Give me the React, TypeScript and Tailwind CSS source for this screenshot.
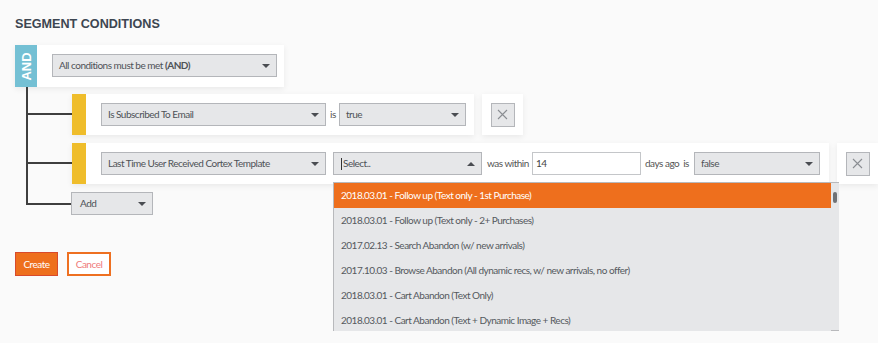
import React from "react";

const Arrow = ({ up = false }: { up?: boolean }) => (
  <svg width="8" height="4" viewBox="0 0 8 4" className="shrink-0">
    {up ? <path d="M0 4 L4 0 L8 4 Z" fill="#4a4d52" /> : <path d="M0 0 L8 0 L4 4 Z" fill="#4a4d52" />}
  </svg>
);

const Select = ({ w, children, up = false }: { w: string; children: React.ReactNode; up?: boolean }) => (
  <div className={`${w} h-[23px] shrink-0 flex items-center justify-between border border-[#b4b6ba] bg-[#e6e7e9] pl-[6px] pr-[6px] text-[10px] text-[#4e5257]`}>
    <span className="whitespace-nowrap">{children}</span>
    <Arrow up={up} />
  </div>
);

const XBox = () => (
  <div className="h-[41px] w-[41px] bg-white shadow-[0_2px_6px_rgba(0,0,0,0.07)] flex items-center justify-center shrink-0">
    <div className="w-[24px] h-[24px] border border-[#b4b6ba] bg-[#e6e7e9] flex items-center justify-center">
      <svg width="11" height="11" viewBox="0 0 11 11">
        <path d="M1 1 L10 10 M10 1 L1 10" stroke="#8a8d92" strokeWidth="1.1" />
      </svg>
    </div>
  </div>
);

const Connector = ({ gap, top, last = false }: { gap: string; top: string; last?: boolean }) => (
  <div className="w-[46px] shrink-0 flex flex-col">
    <div className={`${gap} border-l-2 border-[#3f3f3f]`} />
    <div className={`${top} border-l-2 border-b-2 border-[#3f3f3f]`} />
    <div className={last ? "flex-1" : "flex-1 border-l-2 border-[#3f3f3f]"} />
  </div>
);

const items = [
  "2018.03.01 - Follow up (Text only - 1st Purchase)",
  "2018.03.01 - Follow up (Text only - 2+ Purchases)",
  "2017.02.13 - Search Abandon (w/ new arrivals)",
  "2017.10.03 - Browse Abandon (All dynamic recs, w/ new arrivals, no offer)",
  "2018.03.01 - Cart Abandon (Text Only)",
  "2018.03.01 - Cart Abandon (Text + Dynamic Image + Recs)",
];

export default function App() {
  return (
    <div className="w-[878px] h-[343px] overflow-hidden bg-[#fafafa] px-[15px] pt-[17px] font-['Lato',sans-serif] tracking-[-0.5px]">
      <h1 className="font-['Liberation_Sans',sans-serif] font-bold text-[12.6px] leading-[14px] tracking-normal text-[#3d4651]">
        SEGMENT CONDITIONS
      </h1>
      <div className="mt-[14px]">
        <div className="flex w-[269px] h-[42px] bg-white shadow-[0_2px_6px_rgba(0,0,0,0.07)]">
          <div className="w-[22px] bg-[#74c0d4] flex items-center justify-center">
            <span className="-rotate-90 text-white font-bold text-[13px] tracking-normal font-['Liberation_Sans',sans-serif] leading-none">AND</span>
          </div>
          <div className="ml-[15px] pt-[9px]">
            <Select w="w-[225px]">
              All conditions must be met <b className="font-bold">(AND)</b>
            </Select>
          </div>
        </div>
        <div className="flex flex-col pl-[11px]">
          {/* Row 1 */}
          <div className="flex">
            <Connector gap="h-[7px]" top="h-[21px]" />
            <div className="pt-[7px] flex gap-[8px]">
              <div className="h-[41px] flex items-center bg-white shadow-[0_2px_6px_rgba(0,0,0,0.07)] pr-[8px]">
                <div className="w-[14px] self-stretch bg-[#efbd2b]" />
                <div className="ml-[15px] flex items-center">
                  <Select w="w-[225px]">Is Subscribed To Email</Select>
                  <span className="w-[13px] pl-[4px] text-[10px] text-[#555]">is</span>
                  <Select w="w-[127px]">true</Select>
                </div>
              </div>
              <XBox />
            </div>
          </div>
          {/* Row 2 */}
          <div className="flex">
            <Connector gap="h-[8px]" top="h-[21px]" />
            <div className="pt-[8px] flex gap-[8px]">
              <div className="h-[41px] flex items-center bg-white shadow-[0_2px_6px_rgba(0,0,0,0.07)] pr-[9px]">
                <div className="w-[14px] self-stretch bg-[#efbd2b]" />
                <div className="ml-[15px] flex items-center">
                  <Select w="w-[225px]">Last Time User Received Cortex Template</Select>
                  <div className="relative ml-[7px]">
                    <div className="w-[149px] h-[23px] flex items-center justify-between border border-[#b4b6ba] bg-[#e6e7e9] pl-[7px] pr-[6px] text-[10px] text-[#4e5257]">
                      <span className="flex items-center">
                        <span className="w-px h-[12px] bg-[#333] mr-[1px]" />
                        Select..
                      </span>
                      <Arrow up />
                    </div>
                    <div className="absolute left-0 top-[30px] z-10 w-[506px] h-[149px] overflow-hidden flex border-l border-t border-[#b8b9bc] bg-[#e6e7e9]">
                      <div className="flex-1 flex flex-col">
                        {items.map((t, i) => (
                          <div
                            key={t}
                            className={`h-[25px] shrink-0 flex items-center pl-[7px] text-[10px] whitespace-nowrap ${
                              i === 0 ? "bg-[#ee6f1d] text-white" : "text-[#55595e]"
                            }`}
                          >
                            {t}
                          </div>
                        ))}
                      </div>
                      <div className="w-[8px] shrink-0 bg-[#e6e7e9] border-b border-[#b8b9bc]">
                        <div className="ml-[2px] mt-[9px] w-[4px] h-[11px] rounded-[2px] bg-[#6f7276]" />
                      </div>
                    </div>
                  </div>
                  <span className="w-[50px] pl-[5px] text-[10px] text-[#555] whitespace-nowrap">was within</span>
                  <div className="w-[109px] h-[23px] border border-[#c4c6c9] bg-white pl-[3px] flex items-center text-[10px] text-[#444]">
                    14
                  </div>
                  <span className="w-[53px] pl-[4px] text-[10px] text-[#555] whitespace-nowrap">
                    days ago<span className="ml-[4px]">is</span>
                  </span>
                  <Select w="w-[126px]">false</Select>
                </div>
              </div>
              <XBox />
            </div>
          </div>
          {/* Add row */}
          <div className="flex">
            <Connector gap="h-[8px]" top="h-[13px]" last />
            <div className="pt-[8px] -ml-px">
              <Select w="w-[82px]">
                <span className="pl-[2px]">Add</span>
              </Select>
            </div>
          </div>
        </div>
      </div>
      <div className="mt-[37px] flex gap-[9px]">
        <button className="w-[43px] h-[24px] bg-[#ee6f1d] border border-[#d84a2c] text-white text-[10px] flex items-center justify-center">
          Create
        </button>
        <button className="w-[44px] h-[24px] bg-white border-2 border-[#ee7021] text-[#ef7a7a] text-[10px] flex items-center justify-center">
          Cancel
        </button>
      </div>
    </div>
  );
}
